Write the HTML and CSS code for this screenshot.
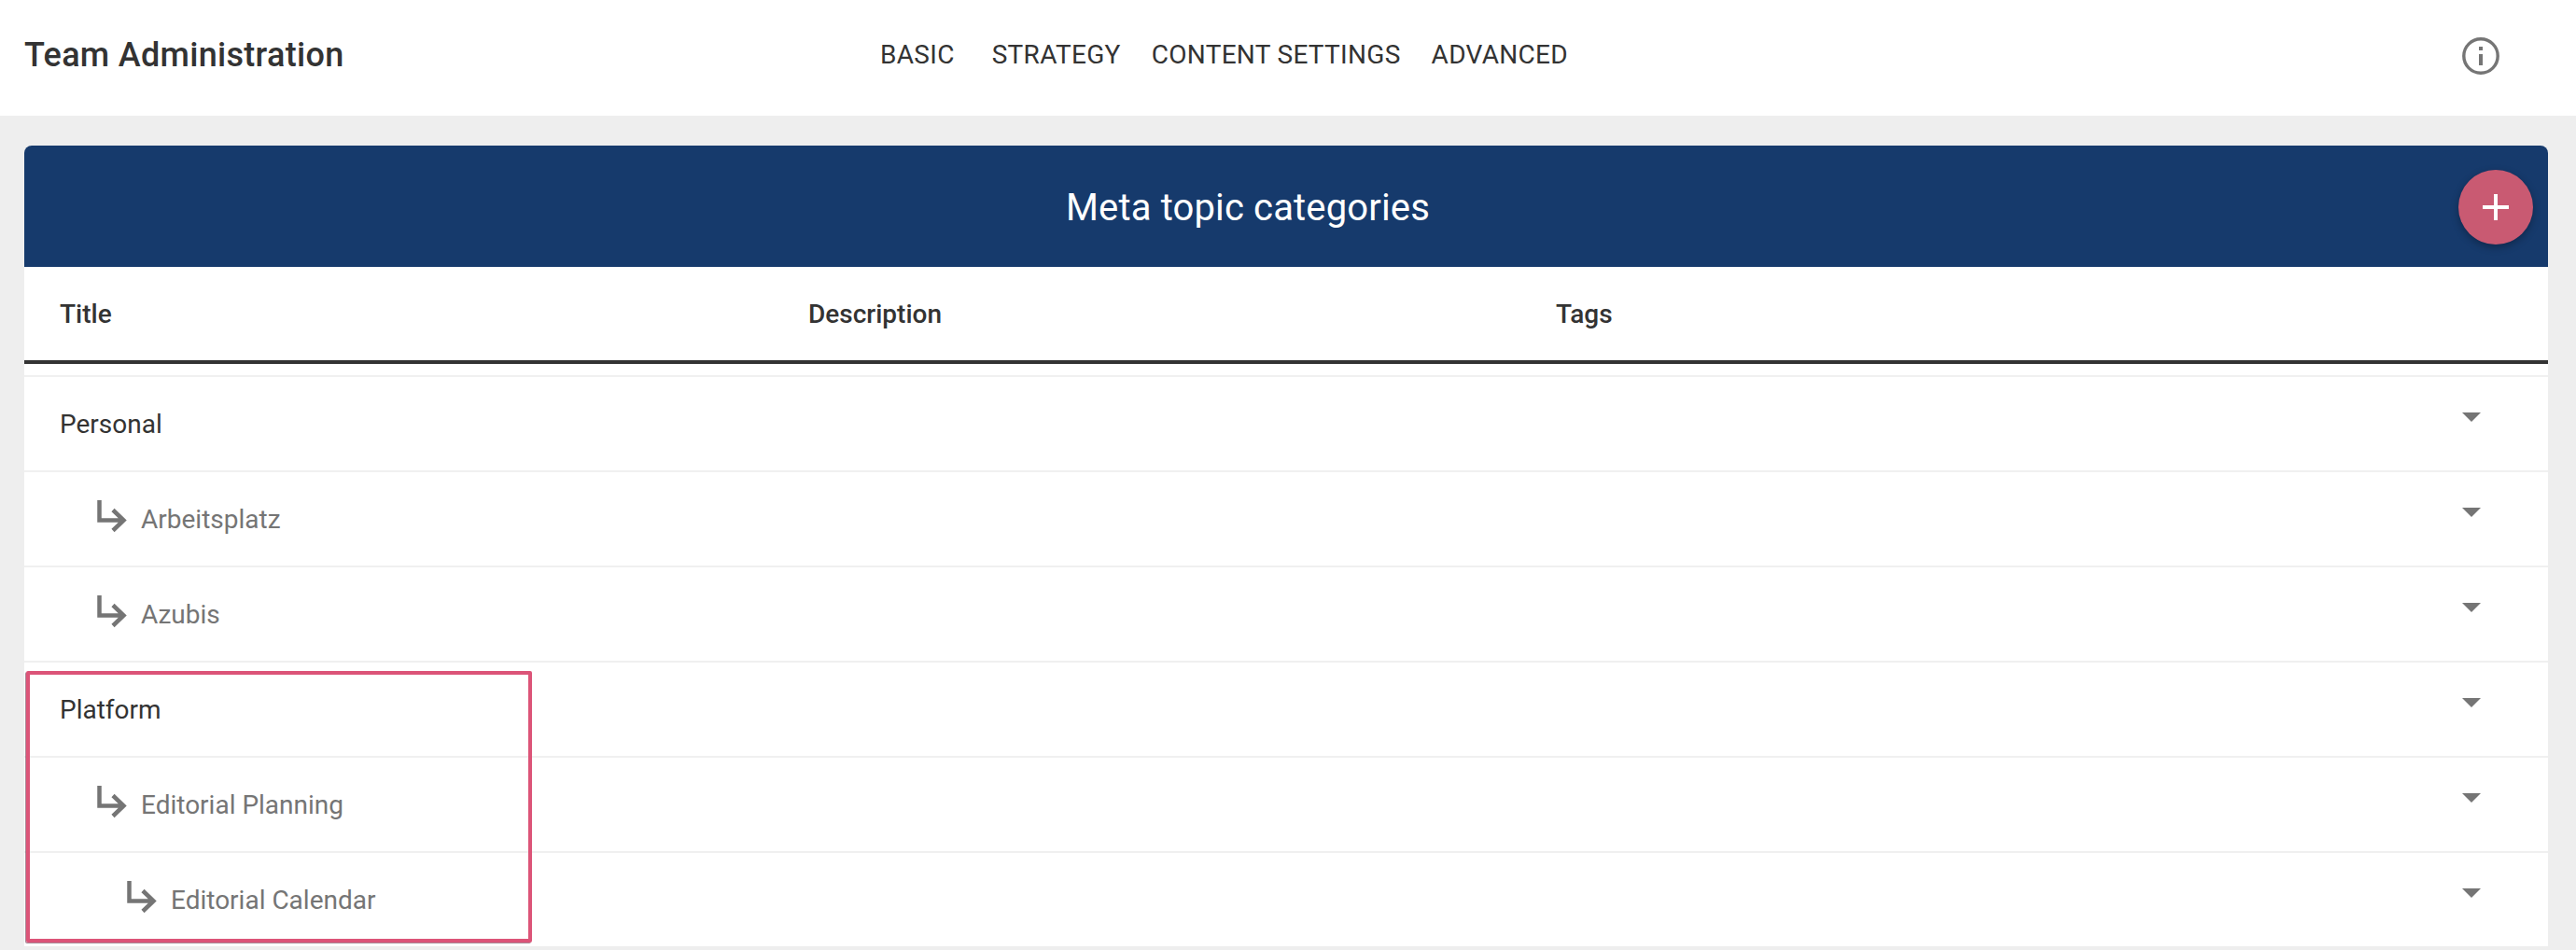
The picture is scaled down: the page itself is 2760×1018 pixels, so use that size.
FILE: index.html
```html
<!DOCTYPE html>
<html lang="en">
<head>
<meta charset="UTF-8">
<title>Team Administration</title>
<link rel="stylesheet" href="styles.css">
</head>
<body>

<header class="topbar">
  <div class="topbar-title">Team Administration</div>
  <nav class="tabs">
    <a class="tab tab-basic">BASIC</a>
    <a class="tab">STRATEGY</a>
    <a class="tab">CONTENT SETTINGS</a>
    <a class="tab">ADVANCED</a>
  </nav>
  <svg class="info-icon" viewBox="0 0 40 40">
    <circle cx="20" cy="20" r="18.2" fill="none" stroke="#757575" stroke-width="3.4"/>
    <rect x="18" y="10" width="4" height="4" fill="#757575"/>
    <rect x="18" y="18" width="4" height="12" fill="#757575"/>
  </svg>
</header>

<main class="content">
  <section class="card">
    <div class="card-head">
      <h1>Meta topic categories</h1>
      <button class="fab">
        <svg viewBox="0 0 28 28" width="28" height="28"><path d="M12 0h4v12h12v4H16v12h-4V16H0v-4h12z" fill="#fff"/></svg>
      </button>
    </div>

    <div class="table-head">
      <div>Title</div>
      <div>Description</div>
      <div>Tags</div>
    </div>

    <div class="rows">
      <div class="row">
        <span class="row-title">Personal</span>
        <span class="caret"></span>
      </div>
      <div class="row child">
        <svg class="sub-arrow" viewBox="0 0 32 36"><path d="M2.500 0V21.500H28M17 10.500 28.500 21.500 17 32.500" fill="none" stroke="#757575" stroke-width="4.500"/></svg>
        <span class="row-title">Arbeitsplatz</span>
        <span class="caret"></span>
      </div>
      <div class="row child">
        <svg class="sub-arrow" viewBox="0 0 32 36"><path d="M2.500 0V21.500H28M17 10.500 28.500 21.500 17 32.500" fill="none" stroke="#757575" stroke-width="4.500"/></svg>
        <span class="row-title">Azubis</span>
        <span class="caret"></span>
      </div>
      <div class="row">
        <span class="row-title">Platform</span>
        <span class="caret"></span>
      </div>
      <div class="row child">
        <svg class="sub-arrow" viewBox="0 0 32 36"><path d="M2.500 0V21.500H28M17 10.500 28.500 21.500 17 32.500" fill="none" stroke="#757575" stroke-width="4.500"/></svg>
        <span class="row-title">Editorial Planning</span>
        <span class="caret"></span>
      </div>
      <div class="row child grandchild">
        <svg class="sub-arrow" viewBox="0 0 32 36"><path d="M2.500 0V21.500H28M17 10.500 28.500 21.500 17 32.500" fill="none" stroke="#757575" stroke-width="4.500"/></svg>
        <span class="row-title">Editorial Calendar</span>
        <span class="caret"></span>
      </div>
      <div class="highlight"></div>
    </div>
  </section>
</main>

</body>
</html>
```

FILE: styles.css
```css
html, body {
  height: 100%;
  overflow: hidden;
}

body {
  margin: 0;
  background-color: #eeeeee;
  color: #333;
  font-family: Roboto, "Liberation Sans", sans-serif;
}

.topbar {
  display: flex;
  align-items: center;
  height: 124px;
  padding: 0 82px 0 26px;
  background-color: white;
}

.topbar-title {
  width: 917px;
  margin-bottom: 6px;
  font-size: 36px;
  font-weight: 500;
  letter-spacing: 0.3px;
}

.tabs {
  display: flex;
  flex: 1;
  gap: 33px;
  margin-bottom: 7px;
  font-size: 28px;
  letter-spacing: 0.3px;
}

.tab-basic {
  margin-right: 7px;
}

.info-icon {
  width: 40px;
  height: 40px;
  margin-bottom: 4px;
}

.content {
  padding: 32px 30px 0 26px;
}

.card {
  background-color: white;
  border-radius: 8px 8px 0 0;
}

.card-head {
  display: flex;
  align-items: center;
  height: 130px;
  padding-right: 16px;
  background-color: #163a6c;
  border-radius: 8px 8px 0 0;
}

.card-head h1 {
  flex: 1;
  margin: 0;
  padding: 3px 0 0 14px;
  color: white;
  font-size: 40px;
  font-weight: 400;
  letter-spacing: 0.15px;
  text-align: center;
}

.fab {
  display: flex;
  align-items: center;
  justify-content: center;
  width: 80px;
  height: 80px;
  margin-top: 2px;
  padding: 0;
  border: none;
  border-radius: 50%;
  background-color: #c95a72;
  box-shadow: 0 3px 8px rgba(0,0,0,0.3);
}

.table-head {
  display: grid;
  grid-template-columns: 802px 801px 1fr;
  align-items: center;
  height: 100px;
  padding-left: 38px;
  border-bottom: 4px solid #333;
  font-size: 28px;
  font-weight: 500;
}

.rows {
  position: relative;
  padding-top: 12px;
}

.row {
  display: flex;
  align-items: center;
  height: 100px;
  padding: 0 72px 0 38px;
  border-top: 2px solid #f0f0f0;
  font-size: 28px;
}

.row.child {
  padding-left: 78px;
  color: #757575;
}

.row.grandchild {
  padding-left: 110px;
}

.sub-arrow {
  width: 32px;
  height: 36px;
  margin: -4px 15px 0 0;
}

.caret {
  width: 0;
  height: 0;
  margin: -14px 0 0 auto;
  border-left: 10px solid transparent;
  border-right: 10px solid transparent;
  border-top: 10px solid #757575;
}

/* red frame around the Platform branch */
.highlight {
  position: absolute;
  left: 2px;
  top: 329px;
  width: 534px;
  height: 283px;
  border: 4px solid #dc5478;
  border-radius: 2px;
  box-shadow: -1px 1px 0 rgba(110,60,80,0.6);
}
```
